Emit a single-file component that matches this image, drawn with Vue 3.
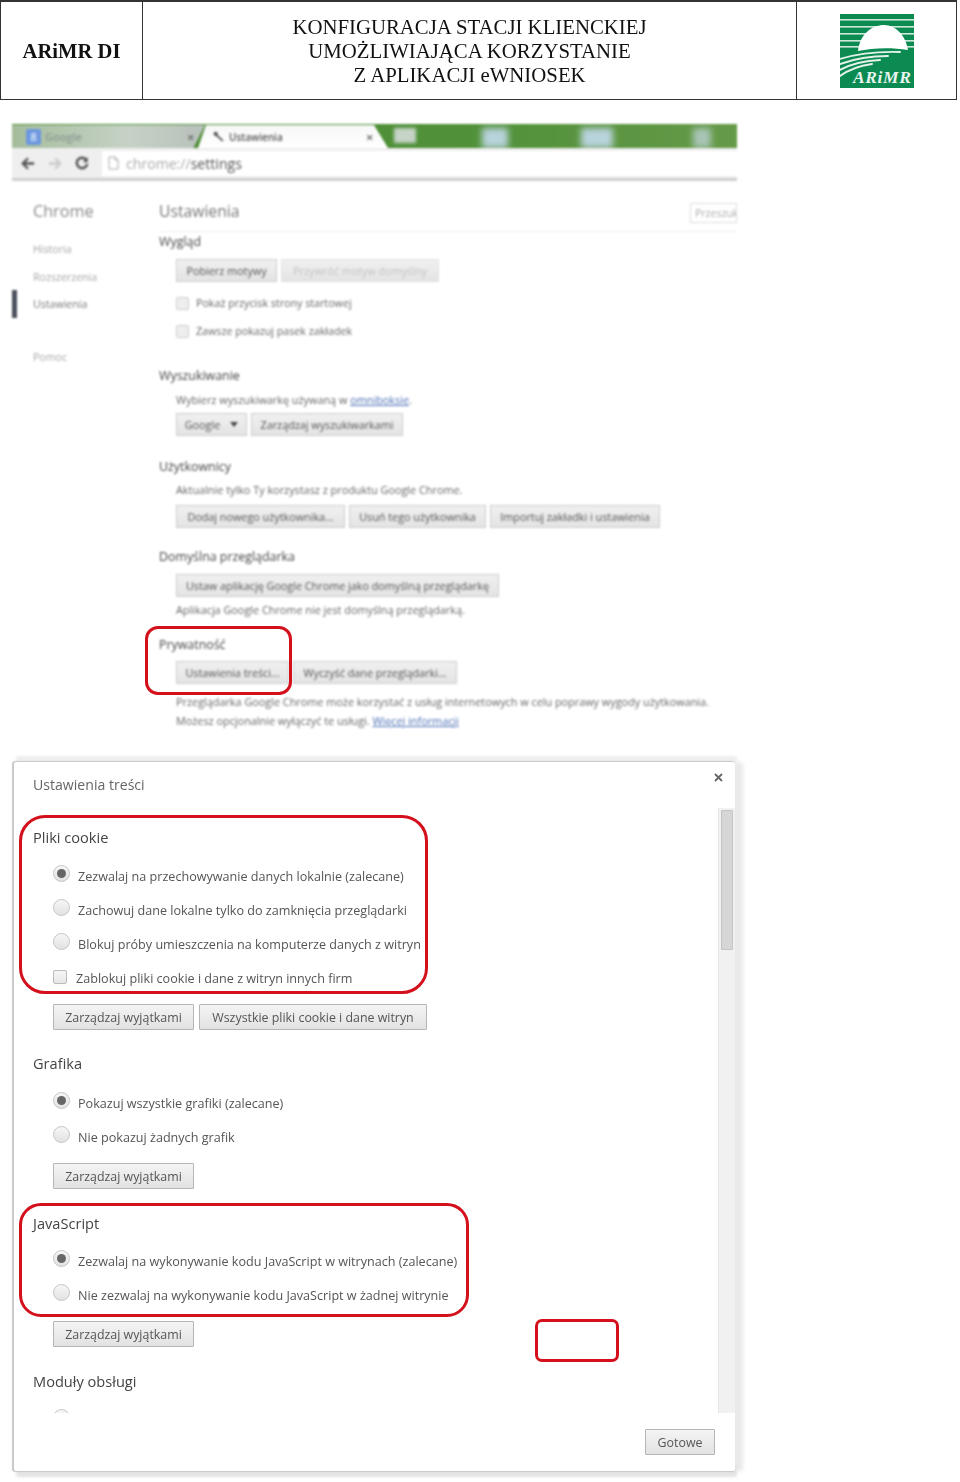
<script setup>
const sideItems = [
  { label: 'Historia', cls: 'side-a' },
  { label: 'Rozszerzenia', cls: 'side-b' },
  { label: 'Ustawienia', cls: 'side-c' },
  { label: 'Pomoc', cls: 'side-d' }
]
</script>

<template>
  <div class="page">
    <header class="doc-head">
      <div class="head-left">ARiMR DI</div>
      <div class="head-mid">KONFIGURACJA STACJI KLIENCKIEJ<br />UMOŻLIWIAJĄCA KORZYSTANIE<br />Z APLIKACJI eWNIOSEK</div>
      <div class="head-right">
        <svg class="logo" width="74" height="74" viewBox="0 0 74 74">
          <rect width="74" height="74" fill="#0b8a52" />
          <g fill="#cfe8da">
            <rect y="5" width="74" height="1.6" />
            <rect y="12" width="74" height="1.6" />
            <rect y="19" width="74" height="1.6" />
            <rect y="26" width="74" height="1.6" />
            <rect y="32" width="74" height="1.6" />
          </g>
          <path d="M18 37 C20 20 32 11 44 11 C56 11 66 22 68 36 C50 33 32 34 18 37Z" fill="#fff" />
          <g fill="none" stroke="#e4f3ea" stroke-linecap="round">
            <path d="M0 45 Q26 37 60 38" stroke-width="1.8" />
            <path d="M0 50 Q22 42 48 42" stroke-width="2" />
            <path d="M0 56 Q16 47 40 46" stroke-width="2" />
            <path d="M0 62 Q12 53 32 50" stroke-width="2" />
          </g>
          <text x="13" y="69" class="logo-text">ARiMR</text>
        </svg>
      </div>
    </header>

    <section class="chrome">
      <div class="tabstrip">
        <div class="tab tab-off">
          <span class="favicon">8</span>
          <span class="tab-title">Google</span>
          <span class="tab-x">×</span>
        </div>
        <div class="tab tab-on">
          <svg class="wrench" width="11" height="11" viewBox="0 0 11 11"><path d="M1 1.5 L3 .6 L5 2.5 L4.6 4 L10.5 9.2 L9.2 10.6 L3.4 5.2 L2 5 L.5 3.2Z" fill="#555" /></svg>
          <span class="tab-title tab-title-on">Ustawienia</span>
          <span class="tab-x tab-x-on">×</span>
        </div>
        <span class="blob blob-new"></span>
        <span class="blob blob-1"></span>
        <span class="blob blob-2"></span>
        <span class="blob blob-3"></span>
      </div>
      <div class="toolbar">
        <svg class="nav" width="14" height="13" viewBox="0 0 16 14"><path d="M8 1 L2 7 L8 13 M2 7 H15" fill="none" stroke="#555" stroke-width="2.6" /></svg>
        <svg class="nav" width="14" height="13" viewBox="0 0 16 14"><path d="M8 1 L14 7 L8 13 M14 7 H1" fill="none" stroke="#ccc" stroke-width="2.6" /></svg>
        <svg class="nav" width="14" height="14" viewBox="0 0 16 16"><path d="M13 4.5 A6 6 0 1 0 14 9" fill="none" stroke="#555" stroke-width="2.8" /><path d="M14.5 1 V7 H9Z" fill="#555" /></svg>
        <div class="omnibox">
          <svg width="11" height="14" viewBox="0 0 11 14"><path d="M1 1 H7 L10 4 V13 H1Z M7 1 V4 H10" fill="#fff" stroke="#aaa" /></svg>
          <span class="url"><span class="url-dim">chrome://</span>settings</span>
        </div>
      </div>
      <div class="settings">
        <aside class="side">
          <div class="side-title">Chrome</div>
          <div v-for="item in sideItems" :key="item.label" :class="['side-item', item.cls]">{{ item.label }}</div>
        </aside>
        <main class="main">
          <div class="main-head">
            <span class="main-title">Ustawienia</span>
            <span class="search">Przeszuk</span>
          </div>
          <h3 class="s-h">Wygląd</h3>
          <div class="s-body">
            <div class="s-btns mt7">
              <span class="s-btn b-themes">Pobierz motywy</span>
              <span class="s-btn s-btn-off b-default">Przywróć motyw domyślny</span>
            </div>
            <div class="s-check mt7"><i class="s-box"></i>Pokaż przycisk strony startowej</div>
            <div class="s-check"><i class="s-box"></i>Zawsze pokazuj pasek zakładek</div>
          </div>
          <h3 class="s-h mt21">Wyszukiwanie</h3>
          <div class="s-body">
            <p class="s-text mt4">Wybierz wyszukiwarkę używaną w <a class="s-link">omniboksie</a>.</p>
            <div class="s-btns mt3">
              <span class="s-btn b-google">Google<i class="caret"></i></span>
              <span class="s-btn b-engines">Zarządzaj wyszukiwarkami</span>
            </div>
          </div>
          <h3 class="s-h mt21">Użytkownicy</h3>
          <div class="s-body">
            <p class="s-text mt3">Aktualnie tylko Ty korzystasz z produktu Google Chrome.</p>
            <div class="s-btns mt5">
              <span class="s-btn b-add">Dodaj nowego użytkownika...</span>
              <span class="s-btn b-del">Usuń tego użytkownika</span>
              <span class="s-btn b-imp">Importuj zakładki i ustawienia</span>
            </div>
          </div>
          <h3 class="s-h mt19">Domyślna przeglądarka</h3>
          <div class="s-body">
            <div class="s-btns mt7">
              <span class="s-btn b-set">Ustaw aplikację Google Chrome jako domyślną przeglądarkę</span>
            </div>
            <p class="s-text mt3">Aplikacja Google Chrome nie jest domyślną przeglądarką.</p>
          </div>
          <h3 class="s-h mt15">Prywatność</h3>
          <div class="s-body">
            <div class="s-btns mt6">
              <span class="s-btn b-content">Ustawienia treści...</span>
              <span class="s-btn b-clear">Wyczyść dane przeglądarki...</span>
            </div>
            <p class="s-text mt8">Przeglądarka Google Chrome może korzystać z usług internetowych w celu poprawy wygody użytkowania.</p>
            <p class="s-text s-text-tight">Możesz opcjonalnie wyłączyć te usługi. <a class="s-link">Więcej informacji</a></p>
          </div>
        </main>
      </div>
    </section>

    <section class="dialog-wrap">
      <div class="dialog">
        <div class="d-head">
          <span class="d-title">Ustawienia treści</span>
          <svg class="d-close" width="9" height="9" viewBox="0 0 9 9"><path d="M1 1 L8 8 M8 1 L1 8" stroke="#666" stroke-width="1.8" /></svg>
        </div>
        <div class="d-scroll">
          <div class="d-bar"><div class="d-thumb"></div></div>
          <h4 class="d-h mt18">Pliki cookie</h4>
          <div class="d-rows mt9">
            <label class="d-row"><i class="radio radio-on"></i>Zezwalaj na przechowywanie danych lokalnie (zalecane)</label>
            <label class="d-row"><i class="radio"></i>Zachowuj dane lokalne tylko do zamknięcia przeglądarki</label>
            <label class="d-row"><i class="radio"></i>Blokuj próby umieszczenia na komputerze danych z witryn</label>
            <label class="d-row d-row-check"><i class="d-box"></i>Zablokuj pliki cookie i dane z witryn innych firm</label>
          </div>
          <div class="d-btns mt9">
            <span class="d-btn b-exc">Zarządzaj wyjątkami</span>
            <span class="d-btn b-all">Wszystkie pliki cookie i dane witryn</span>
          </div>
          <h4 class="d-h mt22">Grafika</h4>
          <div class="d-rows mt10">
            <label class="d-row"><i class="radio radio-on"></i>Pokazuj wszystkie grafiki (zalecane)</label>
            <label class="d-row"><i class="radio"></i>Nie pokazuj żadnych grafik</label>
          </div>
          <div class="d-btns mt9">
            <span class="d-btn b-exc">Zarządzaj wyjątkami</span>
          </div>
          <h4 class="d-h mt23">JavaScript</h4>
          <div class="d-rows mt8">
            <label class="d-row"><i class="radio radio-on"></i>Zezwalaj na wykonywanie kodu JavaScript w witrynach (zalecane)</label>
            <label class="d-row"><i class="radio"></i>Nie zezwalaj na wykonywanie kodu JavaScript w żadnej witrynie</label>
          </div>
          <div class="d-btns mt9">
            <span class="d-btn b-exc">Zarządzaj wyjątkami</span>
          </div>
          <h4 class="d-h mt23">Moduły obsługi</h4>
          <div class="d-rows mt9">
            <label class="d-row"><i class="radio"></i></label>
          </div>
        </div>
        <div class="d-foot">
          <span class="d-btn b-done">Gotowe</span>
        </div>
      </div>
    </section>

    <div class="mark mark-priv"></div>
    <div class="mark mark-cookie"></div>
    <div class="mark mark-js"></div>
    <div class="mark mark-empty"></div>
  </div>
</template>

<style scoped>
.page {
  position: relative;
  width: 960px;
  height: 1482px;
  overflow: hidden;
  background: #fff;
  font-family: "Open Sans", "Noto Sans", sans-serif;
}

/* document header */
.doc-head {
  display: grid;
  grid-template-columns: 141px 655px 1fr;
  width: 957px;
  height: 100px;
  box-sizing: border-box;
  border: 1px solid #333;
  border-top-width: 2px;
  font-family: "Liberation Serif", serif;
  color: #111;
  filter: blur(0.3px);
}
.head-left {
  display: flex;
  align-items: center;
  justify-content: center;
  font-weight: 700;
  font-size: 20.6px;
  padding-top: 2px;
}
.head-mid {
  border-left: 1px solid #333;
  border-right: 1px solid #333;
  font-size: 20.8px;
  line-height: 24px;
  text-align: center;
  padding-top: 13px;
}
.head-right {
  display: flex;
  padding: 12px 0 0 43px;
}
.logo-text {
  font-family: "Liberation Serif", serif;
  font-style: italic;
  font-weight: 700;
  font-size: 17.5px;
  letter-spacing: 0.6px;
  fill: #e8f5ee;
}

/* browser screenshot */
.chrome {
  margin: 24px 0 0 12px;
  width: 725px;
  color: #666;
  filter: blur(0.8px);
}
.tabstrip {
  position: relative;
  height: 24px;
  display: flex;
  overflow: hidden;
  background: linear-gradient(90deg, #4c8c34 0, #4f9038 60%, #659a48 100%);
}
.tab {
  position: absolute;
  top: 1px;
  bottom: 0;
  display: flex;
  align-items: center;
  box-sizing: border-box;
}
.tab-off {
  left: 0;
  width: 193px;
  padding-left: 14px;
  background: linear-gradient(90deg, #a4bd9b, #c6d2c6 60%, #b7c0bb);
  clip-path: polygon(0 0, 100% 0, 94% 100%, 0 100%);
}
.tab-on {
  left: 186px;
  width: 190px;
  padding-left: 15px;
  background: linear-gradient(#f7f7f7, #fff);
  clip-path: polygon(8px 0, 176px 0, 190px 100%, 0 100%);
}
.favicon {
  width: 15px;
  height: 16px;
  background: #6d98e0;
  color: #fff;
  font-size: 11px;
  line-height: 16px;
  text-align: center;
  border-radius: 2px;
}
.tab-title {
  margin-left: 4px;
  font-size: 11px;
  font-weight: 600;
  color: #8f9c96;
  width: 142px;
}
.tab-title-on {
  margin-left: 5px;
  width: 137px;
  color: #555;
  font-weight: 600;
  font-size: 10px;
}
.tab-x {
  color: #777;
  font-size: 13px;
  font-weight: 700;
}
.wrench { flex: none; }
.blob {
  position: absolute;
  top: 4px;
  height: 20px;
  background: #b9d3dc;
  filter: blur(3px);
}
.blob-new { left: 382px; width: 22px; height: 15px; background: #c6d4c8; filter: blur(1.5px); }
.blob-1 { left: 470px; width: 26px; }
.blob-2 { left: 569px; width: 32px; }
.blob-3 { left: 681px; width: 18px; background: #a9c6b6; }
.toolbar {
  display: flex;
  align-items: center;
  gap: 13px;
  height: 33px;
  padding-left: 9px;
  box-sizing: border-box;
  background: #efefef;
  border-bottom: 3px solid #cfcfcf;
}
.nav { flex: none; }
.omnibox {
  flex: 1;
  display: flex;
  align-items: center;
  gap: 7px;
  height: 25px;
  padding-left: 6px;
  background: #fff;
}
.url {
  font-size: 14.1px;
  color: #555;
}
.url-dim { color: #aaa; }

.settings {
  display: flex;
}
.side {
  position: relative;
  width: 147px;
  flex: none;
  padding-left: 21px;
  box-sizing: border-box;
}
.side-title {
  margin-top: 18px;
  font-size: 16.2px;
  line-height: 24px;
  color: #8a8a8a;
}
.side-item {
  font-size: 10.6px;
  line-height: 16px;
  color: #a6a6a6;
}
.side-a { margin-top: 18px; }
.side-b { margin-top: 12px; }
.side-c { margin-top: 11px; color: #777; }
.side-d { margin-top: 37px; }
.side-c::before {
  content: "";
  position: absolute;
  left: 0;
  top: 109px;
  width: 5px;
  height: 28px;
  background: #4a4f5c;
}
.main {
  flex: 1;
  min-width: 0;
  overflow: hidden;
}
.main-head {
  display: flex;
  justify-content: space-between;
  height: 50px;
  border-bottom: 1px solid #eee;
}
.main-title {
  margin-top: 18px;
  font-size: 15.7px;
  line-height: 24px;
  color: #777;
}
.search {
  width: 47px;
  height: 20px;
  margin-top: 22px;
  box-sizing: border-box;
  border: 1px solid #ddd;
  font-size: 10.5px;
  line-height: 18px;
  padding-left: 4px;
  overflow: hidden;
  color: #aaa;
}
.s-h {
  margin: 0;
  font-size: 12.4px;
  font-weight: 400;
  line-height: 20px;
  color: #444;
}
.s-body { padding-left: 17px; }
.s-btns { display: flex; gap: 4px; }
.s-btn {
  display: flex;
  align-items: center;
  justify-content: center;
  height: 23px;
  box-sizing: border-box;
  border: 1px solid #ccc;
  background: linear-gradient(#f0f0f0, #e4e4e4);
  font-size: 10.8px;
  color: #555;
  white-space: nowrap;
}
.s-btn-off { color: #c2c2c2; border-color: #e0e0e0; }
.b-themes { width: 101px; }
.b-default { width: 158px; }
.b-google { width: 71px; gap: 10px; }
.b-engines { width: 152px; }
.b-add { width: 169px; }
.b-del { width: 137px; }
.b-imp { width: 170px; }
.b-set { width: 323px; }
.b-content { width: 113px; }
.b-clear { width: 164px; }
.caret {
  width: 0;
  height: 0;
  border: 4px solid transparent;
  border-top: 5px solid #444;
  border-bottom: 0;
}
.s-check {
  display: flex;
  align-items: center;
  gap: 7px;
  height: 28px;
  font-size: 10.7px;
  color: #666;
}
.s-box {
  width: 13px;
  height: 13px;
  box-sizing: border-box;
  border: 1px solid #ccc;
  border-radius: 2px;
  background: #eee;
}
.s-text {
  margin: 0;
  font-size: 10.85px;
  line-height: 20px;
  color: #666;
  white-space: nowrap;
}
.s-text-tight { line-height: 18px; }
.s-link { color: #4a6fb5; text-decoration: underline; }

/* dialog screenshot */
.dialog-wrap {
  position: absolute;
  left: 14px;
  top: 762px;
  width: 721px;
  height: 709px;
  filter: blur(0.3px);
}
.dialog {
  height: 100%;
  background: #fff;
  border-radius: 2px;
  box-shadow: -1px 0 1px 1px #c8c8c8, 2px -6px 3px 0 #eee, 2px 6px 3px 0 #e4e4e4, 8px 0 4px 0 #e8e8e8;
  color: #555;
  display: flex;
  flex-direction: column;
}
.d-head {
  position: relative;
  height: 46px;
  flex: none;
  padding: 11px 0 0 19px;
  box-sizing: border-box;
}
.d-title {
  font-size: 14.1px;
  line-height: 24px;
  color: #666;
}
.d-close {
  position: absolute;
  top: 11px;
  right: 12px;
}
.d-scroll {
  position: relative;
  height: 605px;
  flex: none;
  overflow: hidden;
  padding-left: 19px;
  display: flow-root;
}
.d-bar {
  position: absolute;
  top: 0;
  right: 0;
  bottom: 0;
  width: 17px;
  box-sizing: border-box;
  background: #f1f1f1;
  border-left: 1px solid #e6e6e6;
  padding: 2px 2px 0 2px;
}
.d-thumb {
  height: 138px;
  background: #d6d6d6;
  border: 1px solid #c4c4c4;
  border-radius: 1px;
}
.d-h {
  margin-bottom: 0;
  padding-bottom: 2px;
  font-size: 14.6px;
  font-weight: 400;
  line-height: 22px;
  color: #444;
}
.d-rows { padding-left: 20px; }
.d-row {
  display: flex;
  align-items: center;
  height: 34px;
  font-size: 12.6px;
  color: #555;
  white-space: nowrap;
}
.radio {
  position: relative;
  flex: none;
  width: 17px;
  height: 17px;
  margin: -6px 8px 0 0;
  box-sizing: border-box;
  border: 1px solid #c6c6c6;
  border-radius: 50%;
  background: linear-gradient(#f6f6f6, #e2e2e2);
}
.radio-on::after {
  content: "";
  position: absolute;
  inset: 3px;
  border-radius: 50%;
  background: #666;
}
.d-box {
  flex: none;
  width: 14px;
  height: 14px;
  margin: -3px 9px 0 0;
  box-sizing: border-box;
  border: 1px solid #bbb;
  border-radius: 2px;
  background: linear-gradient(#f6f6f6, #e6e6e6);
}
.d-btns {
  display: flex;
  gap: 5px;
  padding-left: 20px;
}
.d-btn {
  display: flex;
  align-items: center;
  justify-content: center;
  height: 26px;
  box-sizing: border-box;
  border: 1px solid #b5b5b5;
  border-radius: 1px;
  background: linear-gradient(#f4f4f4, #e2e2e2);
  font-size: 12.4px;
  color: #555;
  white-space: nowrap;
}
.b-exc { width: 141px; }
.b-all { width: 228px; }
.b-done { width: 70px; }
.d-foot {
  display: flex;
  justify-content: flex-end;
  padding: 16px 20px 0 0;
}

/* annotation frames */
.mark {
  position: absolute;
  box-sizing: border-box;
  border: 3px solid #d3101c;
}
.mark-priv { left: 145px; top: 626px; width: 147px; height: 69px; border-radius: 13px; }
.mark-cookie { left: 19px; top: 815px; width: 409px; height: 179px; border-radius: 26px; }
.mark-js { left: 19px; top: 1203px; width: 450px; height: 114px; border-radius: 22px; }
.mark-empty { left: 535px; top: 1319px; width: 84px; height: 43px; border-radius: 7px; }

/* spacing scale, last so it wins over the element rules above */
.mt3 { margin-top: 3px; }
.mt4 { margin-top: 4px; }
.mt5 { margin-top: 5px; }
.mt6 { margin-top: 6px; }
.mt7 { margin-top: 7px; }
.mt8 { margin-top: 8px; }
.mt9 { margin-top: 9px; }
.mt10 { margin-top: 10px; }
.mt15 { margin-top: 15px; }
.mt18 { margin-top: 18px; }
.mt19 { margin-top: 19px; }
.mt21 { margin-top: 21px; }
.mt22 { margin-top: 22px; }
.mt23 { margin-top: 23px; }
</style>
